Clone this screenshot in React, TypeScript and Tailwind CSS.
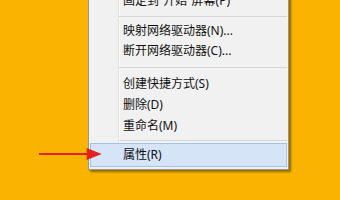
import React from "react";

const Sep = ({ cls }: { cls: string }) => (
  <div className={cls}>
    <div className="ml-[29px] h-px bg-[#D5D5D5]" />
  </div>
);

const Item = ({ label, h }: { label: string; h: string }) => (
  <div className={`flex items-center pl-[33px] ${h}`}>
    <span className="whitespace-nowrap">{label}</span>
  </div>
);

export default function App() {
  return (
    <div className="relative w-[340px] h-[200px] overflow-hidden bg-[#F8B400] font-['Noto_Sans','Noto_Sans_CJK_SC',sans-serif] text-[12px] text-[#111]">
      <div className="absolute left-[88px] top-[-12px] w-[201px] border border-[#979797] bg-[#F1F1F1] px-[1px] py-[2px] shadow-[2px_2px_2px_rgba(60,40,0,0.55)]">
        <div className="absolute left-[29px] top-0 bottom-0 w-px bg-[#E0E0E0]" />
        <div className="absolute left-[30px] top-0 bottom-0 w-px bg-[#FAFAFA]" />
        <div className="relative flex flex-col">
          <Item label="固定到“开始”屏幕(P)" h="h-[20px]" />
          <Sep cls="pt-[5px] pb-[4px]" />
          <Item label="映射网络驱动器(N)..." h="h-[20px]" />
          <Item label="断开网络驱动器(C)..." h="h-[20px]" />
          <Sep cls="pt-[6px] pb-[5px]" />
          <Item label="创建快捷方式(S)" h="h-[21px]" />
          <Item label="删除(D)" h="h-[21px]" />
          <Item label="重命名(M)" h="h-[21px]" />
          <Sep cls="pt-[4px] pb-[2px]" />
          <div className="flex items-center h-[24px] pl-[32px] border border-[#A4C2E6] bg-[#D5E4F6]">
            <span className="whitespace-nowrap">属性(R)</span>
          </div>
        </div>
      </div>
      <svg className="absolute left-[38px] top-[146px]" width="66" height="16" viewBox="0 0 66 16">
        <line x1="1" y1="8" x2="50" y2="8" stroke="#E4211B" strokeWidth="2" />
        <polygon points="48.7,2 63.7,8 48.7,14" fill="#E4211B" />
      </svg>
    </div>
  );
}
